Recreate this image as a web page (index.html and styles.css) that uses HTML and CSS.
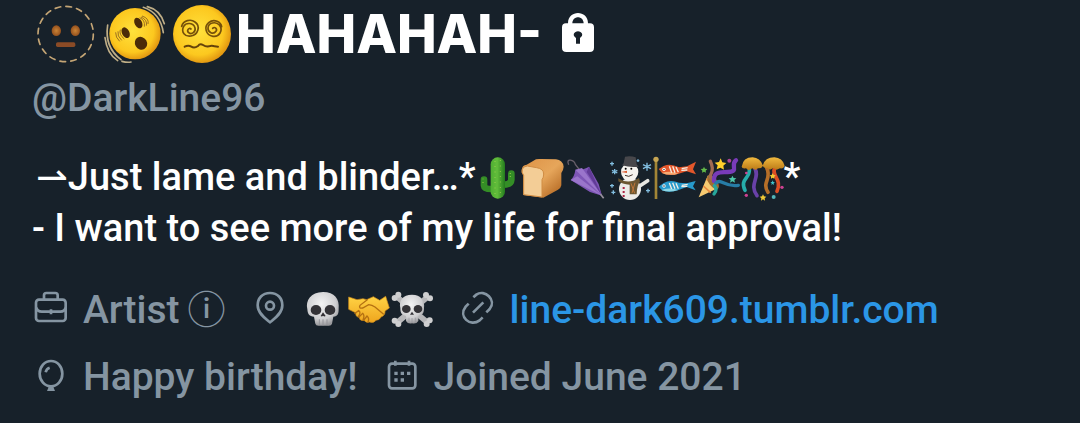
FILE: index.html
```
<!DOCTYPE html>
<html lang="en">
<head>
<meta charset="utf-8">
<meta name="viewport" content="width=device-width, initial-scale=1">
<title>Profile</title>
<link rel="stylesheet" href="styles.css">
</head>
<body>
<svg class="defs" aria-hidden="true">
  <defs>
    <radialGradient id="face" cx=".45" cy=".45" r=".55"><stop offset="0" stop-color="#ffe13c"/><stop offset=".75" stop-color="#fcc81f"/><stop offset="1" stop-color="#e49a12"/></radialGradient>
    <radialGradient id="bone" cx=".45" cy=".35" r=".65"><stop offset="0" stop-color="#f4f4f4"/><stop offset=".7" stop-color="#cfcfd1"/><stop offset="1" stop-color="#98989b"/></radialGradient>
    <radialGradient id="eye"><stop offset="0" stop-color="#c98336"/><stop offset="1" stop-color="#94501d"/></radialGradient>
    <linearGradient id="cactus"><stop offset="0" stop-color="#4fae32"/><stop offset=".45" stop-color="#62bd3b"/><stop offset="1" stop-color="#237b1d"/></linearGradient>
    <linearGradient id="crust" x2="1" y2="1"><stop offset="0" stop-color="#dd9245"/><stop offset=".5" stop-color="#e6a65b"/><stop offset="1" stop-color="#a95b16"/></linearGradient>
    <linearGradient id="hand" x2="0" y2="1"><stop offset="0" stop-color="#ffd344"/><stop offset="1" stop-color="#efa51e"/></linearGradient>
    <linearGradient id="jelly" x2="0" y2="1"><stop offset="0" stop-color="#f0b93e"/><stop offset="1" stop-color="#b97816"/></linearGradient>
  </defs>
</svg>
<main class="profile">
  <h1 class="name">
    <span class="faces">
      <svg class="face" viewBox="0 0 180 180" role="img" aria-label="Dotted line face">
        <circle cx="89" cy="90" r="83" fill="none" stroke="#c4a575" stroke-width="5" stroke-linecap="round" stroke-dasharray="17 15.6"/>
        <ellipse cx="61" cy="80" rx="14" ry="16" fill="url(#eye)"/><ellipse cx="118" cy="80" rx="14" ry="16" fill="url(#eye)"/>
        <rect x="60" y="115" width="58" height="14" rx="5" fill="#8b4b26"/>
      </svg>
      <svg class="face" viewBox="0 0 180 180" role="img" aria-label="Shaking face">
        <circle cx="93" cy="89" r="77" fill="url(#face)"/>
        <g fill="#4b2b08"><ellipse cx="65" cy="86" rx="11" ry="17" transform="rotate(-28 65 86)"/><ellipse cx="103" cy="57" rx="11" ry="17" transform="rotate(-28 103 57)"/><ellipse cx="111" cy="118" rx="18" ry="20" transform="rotate(-30 111 118)"/></g>
        <g fill="none" stroke="#9c7020" stroke-width="3"><path d="M49 77Q44 91 61 105M42 82Q39 96 53 109M35 85Q34 100 47 112M107 41Q124 48 121 68M111 39Q131 48 127 65M114 36Q136 43 132 60"/></g>
        <g fill="none" stroke="#bfae87" stroke-width="5" stroke-linecap="round"><path d="M11 63Q1 130 51 167M3 101Q9 150 41 170M54 172Q69 176 81 174M118 10Q169 27 178 86M130 8Q168 17 181 59"/></g>
      </svg>
      <svg class="face" viewBox="0 0 180 180" role="img" aria-label="Face with spiral eyes">
        <circle cx="90" cy="90" r="87" fill="url(#face)"/>
        <g fill="none" stroke="#75500a" stroke-width="5" stroke-linecap="round"><path d="M57 75c-7-6-14 5-7 11 9 8 22-3 19-14-4-16-26-18-34-5-9 17 4 32 22 29 22-4 29-30 12-42-13-10-35-5-40 13"/><path d="M122 73c6-7 15 2 10 9-8 11-25 3-24-10 1-16 23-21 34-9 13 16-1 37-19 34-22-4-28-28-13-41 17-14 37-1 39 12"/></g>
        <path d="M38 128Q49 122 58 128T78 126Q84 117 93 123T110 127Q120 123 128 127L138 128" fill="none" stroke="#65420a" stroke-width="6" stroke-linecap="round"/>
      </svg>
    </span>
    <span>HAHAHAH-</span>
    <svg class="lock" viewBox="0 0 96 117" role="img" aria-label="Protected account"><path fill="currentColor" fill-rule="evenodd" d="M18 31C18-10 78-10 78 31H84Q96 31 96 43V104Q96 117 83 117H13Q0 117 0 104V43Q0 31 12 31ZM31 31H65C64 7 32 7 31 31ZM42 92H54V75C67 67 59 55 48 55S29 67 42 75Z"/></svg>
  </h1>
  <p class="handle">@DarkLine96</p>
  <section class="bio">
    <p class="bio-line"><span class="arrow">⇀</span><span>Just lame and blinder…*</span><span class="emojis">
      <svg class="emoji" viewBox="0 0 132 132" role="img" aria-label="Cactus">
        <path d="M24 71V89Q25 99 46 99M106 53V71Q105 86 80 86" fill="none" stroke="#348e26" stroke-width="20" stroke-linecap="round"/>
        <rect x="44" y="4" width="43" height="124" rx="21" fill="url(#cactus)"/>
        <path d="M57 15V119M73 13V119" stroke="#b7d957" stroke-width="3" stroke-dasharray="2 14" fill="none"/><path d="M21 68V86M103 51V70" stroke="#99cf4d" stroke-width="4" stroke-dasharray="2 8"/>
      </svg>
      <svg class="emoji" viewBox="0 0 132 132" role="img" aria-label="Bread">
        <path d="M6 38Q7 27 20 26L48 10Q54 8 63 9L108 10Q128 12 131 32Q130 44 124 51V88Q123 96 114 101L70 125L10 117V58Q2 48 6 38Z" fill="url(#crust)"/>
        <path d="M7 40Q9 31 22 30L50 35Q71 38 71 54Q71 65 66 71V123L11 116V58Q4 50 7 40Z" fill="#f3cd96" stroke="#d08c43" stroke-width="3"/>
      </svg>
      <svg class="emoji" viewBox="0 0 132 132" role="img" aria-label="Closed umbrella">
        <path d="M14 26C4 4 31 12 34 25L48 43" fill="none" stroke="#69606b" stroke-width="4"/>
        <path d="M20 72Q32 60 34 41Q58 43 75 32L104 84L114 119L78 108Z" fill="#7e56b6"/><path d="M34 41L114 119L54 36ZM20 72L114 119L40 61Z" fill="#9a75cb"/><path d="M75 32L114 119L68 48Z" fill="#613b96"/>
        <path d="M109 114L119 127" stroke="#97909c" stroke-width="5"/>
      </svg>
      <svg class="emoji" viewBox="0 0 132 132" role="img" aria-label="Snowman">
        <g stroke="#82bee0" stroke-width="4"><path d="M12 17V29M6 23H18M20 39V55M12 43L28 51M12 51L28 43M12 84V95M6 89H18M16 103V115M10 109H22M117 20V44M105 26L129 38M105 38L129 26M120 98V110M114 104H126M90 10V18M86 14H94"/></g>
        <circle cx="66" cy="99" r="33" fill="#ecebe8"/><circle cx="65" cy="48" r="26" fill="#f5f3ef"/><path d="M95 90L119 74" stroke="#e8e7e2" stroke-width="11" stroke-linecap="round"/>
        <path d="M47 22L51 2Q67-2 83 4L86 25L92 32Q68 36 42 28Z" fill="#47474b"/><path d="M31 67Q60 87 93 66L96 77Q87 85 86 115H65V86Q42 85 31 76Z" fill="#6b5631"/><path d="M69 82L80 112M81 80L72 111" stroke="#c07638" stroke-width="3"/>
        <circle cx="53" cy="38" r="3"/><circle cx="70" cy="38" r="3"/><path d="M57 44L38 48L57 51Z" fill="#db5b31"/><path d="M51 58Q62 65 74 56" fill="none" stroke="#413129" stroke-width="3"/><path d="M47 93V123" stroke="#ad2544" stroke-width="6" stroke-dasharray="6 6"/>
      </svg>
      <svg class="emoji" viewBox="0 0 132 132" role="img" aria-label="Carp streamer">
        <path d="M12 10V129" stroke="#a28536" stroke-width="8"/><circle cx="12" cy="10" r="8" fill="#c6a553"/>
        <path d="M20 39L35 30Q55 21 81 34L105 31L132 17L123 40L132 55L104 46L80 53Q52 61 30 51Z" fill="#e3572b"/><path d="M30 50Q58 44 79 53Q51 61 30 51" fill="#f8aa72"/>
        <path d="M20 92L35 81Q55 70 81 80L104 82L131 75L123 91L131 103L104 93L80 102Q52 112 30 103Z" fill="#279acc"/><path d="M30 101Q58 93 79 102Q51 111 30 103" fill="#8bd6e5"/>
        <g fill="none" stroke="#f4eee4" stroke-width="4"><path d="M52 31L59 50M62 31L69 50M72 33L79 49M89 38L107 35M88 43L106 42M52 81L59 99M62 80L69 98M72 82L79 98M89 88L107 85M88 92L106 91"/></g><circle cx="36" cy="40" r="5" fill="#fff"/><circle cx="36" cy="40" r="2"/><circle cx="36" cy="90" r="5" fill="#fff"/><circle cx="36" cy="90" r="2"/>
      </svg>
      <svg class="emoji" viewBox="0 0 132 132" role="img" aria-label="Party popper">
        <path d="M8 124L35 59Q60 74 65 97Z" fill="#f6ca71"/><path d="M22 90L44 110M31 69L62 97" stroke="#e8873d" stroke-width="5"/><ellipse cx="51" cy="78" rx="12" ry="25" transform="rotate(-37 51 78)" fill="#a26d30"/>
        <g fill="none" stroke-width="10" stroke-linecap="round"><path d="M51 71C28 53 63 57 43 16" stroke="#a16a53"/><path d="M54 75C52 44 77 50 95 48C132 47 101 27 120 13" stroke="#783bb8" stroke-width="13"/><path d="M59 82C77 65 81 94 127 88" stroke="#277ca6"/><path d="M55 89Q66 99 54 114" stroke="#28a69a"/></g>
        <path d="M74 7L79 19L91 21L82 29L84 41L73 35L62 40L65 28L56 20L69 18Z" fill="#ffd02b"/><path d="M109 59L113 66L121 67L115 72L117 80L109 76L102 80L104 72L98 67L106 66Z" fill="#4fc7ab"/><path d="M24 32L27 38L34 39L29 44L30 50L24 47L18 50L19 44L14 39L21 38Z" fill="#62b949"/><circle cx="100" cy="14" r="6" fill="#ad4695"/>
      </svg>
      <svg class="emoji" viewBox="0 0 132 132" role="img" aria-label="Confetti ball">
        <g fill="none" stroke-linecap="round" stroke-width="11"><path d="M28 36C32 71-2 66 15 103" stroke="#26adab"/><path d="M44 36C62 66 25 84 51 119" stroke="#6941a8"/><path d="M80 35C97 69 64 78 84 109" stroke="#b66f28"/><path d="M105 35C91 58 128 69 111 106" stroke="#db4e24"/></g>
        <path d="M5 32Q9 4 38 4Q60 5 69 29Q65 38 54 37L47 42L37 37L26 43L18 37Q6 39 5 32ZM68 29Q75 4 103 4Q127 5 134 29Q131 39 120 37L110 41L100 36L90 41L81 36Q71 37 68 29Z" fill="url(#jelly)"/>
        <g fill="#efc936"><path d="M69 115l3 6 7 1-5 5 1 7-6-4-6 4 1-7-5-5 7-1ZM98 51l3 6 6 1-4 4v6l-5-3-5 3v-6l-4-4 6-1Z"/></g><g fill="#ce4192"><circle cx="126" cy="94" r="5"/><circle cx="19" cy="118" r="5"/><circle cx="19" cy="51" r="4"/></g><path d="M98 73l2 5 5 1-4 3 1 5-4-3-4 3 1-5-4-3 5-1Z" fill="#40c3cc"/><circle cx="101" cy="123" r="6" fill="#51b4b9"/>
      </svg>
    </span><span>*</span></p>
    <p class="bio-line">- I want to see more of my life for final approval!</p>
  </section>
  <ul class="meta">
    <li class="item"><svg class="icon" viewBox="0 0 96 96" aria-hidden="true"><rect x="3" y="23" width="89" height="64" rx="9"/><path d="M27 22V10Q27 3 34 3H61Q68 3 68 10V22M4 47Q7 59 20 59H76Q89 59 92 47M48 52V67"/></svg><span class="job">Artist<span class="info">ⓘ</span></span></li>
    <li class="item"><svg class="icon" viewBox="0 0 96 96" aria-hidden="true"><path d="M48 3C25 3 11 19 11 40C11 65 36 81 48 91C60 81 85 65 85 40C85 19 71 3 48 3Z"/><circle cx="48" cy="41" r="12"/></svg><span class="emojis">
      <svg class="emoji" viewBox="0 0 132 132" role="img" aria-label="Skull">
        <path d="M63 9C26 9 10 35 16 61C17 76 22 82 36 83L40 104Q42 112 53 110H76Q88 112 90 104L94 83C108 82 110 73 110 59C113 31 98 9 63 9Z" fill="url(#bone)"/><ellipse cx="42" cy="63" rx="16" ry="15" fill="#343337"/><ellipse cx="84" cy="63" rx="16" ry="15" fill="#343337"/><path d="M63 70L56 81Q60 84 63 80Q67 84 71 81Z" fill="#302d31"/><path d="M52 91V108M63 91V109M75 91V108" stroke="#929297" stroke-width="3"/>
      </svg>
      <svg class="emoji" viewBox="0 0 132 132" role="img" aria-label="Handshake">
        <path d="M8 24L33 32L51 29L62 32L82 23L101 34L119 22L130 57L117 66Q118 80 105 84Q100 94 90 94Q83 104 71 99Q60 103 54 94Q41 97 40 85Q27 83 30 72L8 61Z" fill="url(#hand)" stroke="#ce8b19" stroke-width="2"/>
        <path d="M64 32L42 49Q37 59 50 57L68 47Q78 48 87 54L112 75M27 73L38 65Q46 70 37 83M39 84L50 73Q57 80 51 93M53 94L63 81Q71 88 66 99" fill="none" stroke="#b47011" stroke-width="4" stroke-linecap="round"/>
      </svg>
      <svg class="emoji" viewBox="0 0 132 132" role="img" aria-label="Skull and crossbones">
        <path d="M20 23L113 101M114 23L20 102" stroke="#b7b7b9" stroke-width="17"/><g fill="#cfcfd0"><circle cx="14" cy="27" r="9"/><circle cx="25" cy="17" r="9"/><circle cx="108" cy="18" r="9"/><circle cx="120" cy="28" r="9"/><circle cx="14" cy="95" r="9"/><circle cx="25" cy="105" r="9"/><circle cx="119" cy="94" r="9"/><circle cx="110" cy="105" r="9"/></g>
        <path d="M66 17C38 17 26 36 31 57C31 74 36 78 48 81V96Q54 106 66 103Q79 106 85 96V81C97 78 102 74 102 57C105 36 93 17 66 17Z" fill="url(#bone)"/><ellipse cx="49" cy="60" rx="13" ry="12" fill="#343337"/><ellipse cx="84" cy="60" rx="13" ry="12" fill="#343337"/><path d="M66 68L60 77H72Z" fill="#343337"/><path d="M57 86V101M66 87V102M76 86V101" stroke="#929297" stroke-width="2"/>
      </svg>
    </span></li>
    <li class="item"><svg class="icon" viewBox="0 0 96 96" aria-hidden="true"><path d="M34 16L43 8C68-10 105 24 83 51L73 61M20 35L11 44C-12 74 24 106 53 85L62 76M33 62L64 31"/></svg><a class="link" href="https://line-dark609.tumblr.com">line-dark609.tumblr.com</a></li>
  </ul>
  <ul class="meta">
    <li class="item"><svg class="icon" viewBox="0 0 96 96" aria-hidden="true"><ellipse cx="48" cy="44" rx="34" ry="38"/><path d="M32 40Q34 29 44 26"/><path class="solid" d="M42 82H54L60 96H36Z"/></svg><span>Happy birthday!</span></li>
    <li class="item"><svg class="icon" viewBox="0 0 96 96" aria-hidden="true"><rect x="9" y="14" width="79" height="74" rx="9"/><path d="M28 5V20M69 5V20"/><path class="solid" d="M25 38h10v10H25zM44 38h10v10H44zM63 38h10v10H63zM25 58h10v10H25zM44 58h10v10H44z"/></svg><span>Joined June 2021</span></li>
  </ul>
</main>
</body>
</html>
```
FILE: styles.css
```
* { box-sizing: border-box; }

body {
  margin: 0;
  background: #17212a;
  color: #fff;
  font-family: Roboto, "Noto Sans", sans-serif;
  font-size: 39px;
  font-weight: 500;
  line-height: 51px;
}

h1, p, ul { margin: 0; padding: 0; }

svg { display: block; flex: none; overflow: visible; }

.defs { position: absolute; width: 0; height: 0; }

.profile { padding: 0 32px 16px; }

.name {
  display: flex;
  align-items: center;
  height: 68px;
  padding-left: 4px;
  font-family: Inter, sans-serif;
  font-size: 53px;
  font-weight: 800;
  line-height: 68px;
  white-space: nowrap;
}

.faces { display: flex; gap: 8px; padding-right: 4px; }
.face { width: 60px; height: 60px; }
.lock { width: 32px; height: 39px; margin-left: 20px; margin-bottom: 4px; }

.handle { padding-top: 5px; color: #8595a2; }

.bio { padding-top: 28px; font-size: 38px; }
.bio-line { display: flex; align-items: center; white-space: nowrap; }
.arrow { padding-left: 4px; font-family: "DejaVu Sans", sans-serif; }
.emojis { display: flex; }
.emoji { width: 44px; height: 44px; }

.meta {
  display: flex;
  padding-top: 16px;
  padding-left: 3px;
  color: #8595a2;
  list-style: none;
  white-space: nowrap;
}

.bio + .meta { padding-top: 31px; }
.item { display: flex; align-items: center; gap: 16px; }
.item + .item { margin-left: 28px; }
.job { display: flex; align-items: center; gap: 8px; }
.info { padding-bottom: 8px; font-family: "Noto Sans CJK JP", sans-serif; font-size: 38px; line-height: 43px; }

.icon {
  width: 32px;
  height: 32px;
  margin-bottom: 6px;
  fill: none;
  stroke: currentColor;
  stroke-width: 8;
}

.icon .solid { fill: currentColor; stroke: none; }
.link { color: #2b96e6; text-decoration: none; }
```
